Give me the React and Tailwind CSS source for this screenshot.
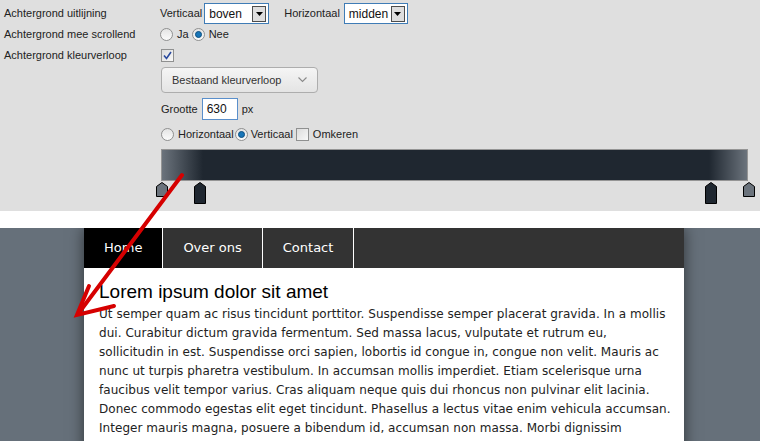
import React from 'react';

const Radio = ({ checked }) => (
  <span className="inline-flex items-center justify-center w-[13px] h-[13px] rounded-full border border-[#8f9090] bg-gradient-to-b from-[#e4e4e4] to-[#fbfbfb] shrink-0">
    {checked && <span className="w-[7px] h-[7px] rounded-full bg-[#1976b8] border border-[#0d4f80]"></span>}
  </span>
);

const Checkbox = ({ checked }) => (
  <span className="inline-flex items-center justify-center w-[13px] h-[13px] border border-[#8f9090] bg-gradient-to-br from-[#dcdcdc] to-[#f8f8f8] shrink-0">
    {checked && (
      <svg width="9" height="9" viewBox="0 0 9 9">
        <path d="M1 4.5 L3.5 7.5 L8 1" fill="none" stroke="#2a4a9e" strokeWidth="1.6" />
      </svg>
    )}
  </span>
);

const Select = ({ value, width }) => (
  <span className={`inline-flex items-center justify-between h-[21px] border border-[#3f7cb6] bg-white pl-[4px] pr-[2px] ${width}`}>
    <span className="text-[12px] text-[#111]">{value}</span>
    <span className="w-[14px] h-[16px] border border-[#4d4d4d] bg-[#dedede] flex items-center justify-center">
      <svg width="7" height="4" viewBox="0 0 7 4"><path d="M0 0 L7 0 L3.5 4 Z" fill="#000" /></svg>
    </span>
  </span>
);

const Marker = ({ left, dark }) => {
  const h = dark ? 21 : 14;
  return (
    <svg
      className="absolute top-[1px]"
      style={{ left: left }}
      width="12"
      height={h + 1}
      viewBox={`0 0 12 ${h + 1}`}
    >
      <path
        d={`M0.5 4.5 L6 0.5 L11.5 4.5 L11.5 ${h + 0.5} L0.5 ${h + 0.5} Z`}
        fill={dark ? '#1f2730' : '#6b737c'}
        stroke="#000"
        strokeWidth="1"
      />
    </svg>
  );
};

const lines = [
  'Ut semper quam ac risus tincidunt porttitor. Suspendisse semper placerat gravida. In a mollis',
  'dui. Curabitur dictum gravida fermentum. Sed massa lacus, vulputate et rutrum eu,',
  'sollicitudin in est. Suspendisse orci sapien, lobortis id congue in, congue non velit. Mauris ac',
  'nunc ut turpis pharetra vestibulum. In accumsan mollis imperdiet. Etiam scelerisque urna',
  'faucibus velit tempor varius. Cras aliquam neque quis dui rhoncus non pulvinar elit lacinia.',
  'Donec commodo egestas elit eget tincidunt. Phasellus a lectus vitae enim vehicula accumsan.',
  'Integer mauris magna, posuere a bibendum id, accumsan non massa. Morbi dignissim',
  'tristique urna ullamcorper molestie.'
];

export default function App() {
  return (
    <div className="relative w-[760px] h-[441px] overflow-hidden bg-white font-['DejaVu_Sans',sans-serif]">
      {/* Settings panel */}
      <div className="h-[211px] bg-[#dfdfdf] text-[11px] text-[#222] pl-[4px] pt-[3px] font-['Liberation_Sans',Arial,sans-serif]">
        <div className="grid grid-cols-[156px_1fr]">
          <div className="h-[21px] flex items-center">Achtergrond uitlijning</div>
          <div className="flex items-center h-[21px]">
            <span className="mr-[2px]">Verticaal</span>
            <Select value="boven" width="w-[65px]" />
            <span className="ml-[15px] mr-[4px]">Horizontaal</span>
            <Select value="midden" width="w-[64px]" />
          </div>

          <div className="h-[19px] flex items-center mt-[1px]">Achtergrond mee scrollend</div>
          <div className="h-[19px] flex items-center mt-[1px]">
            <Radio />
            <span className="ml-[4px] mr-[3px]">Ja</span>
            <Radio checked />
            <span className="ml-[4px]">Nee</span>
          </div>

          <div className="h-[22px] flex items-center">Achtergrond kleurverloop</div>
          <div className="h-[22px] flex items-center pl-[1px]">
            <Checkbox checked />
          </div>

          <div></div>
          <div className="pl-[1px] pt-[1px]">
            <div className="w-[157px] h-[26px] border border-[#adadad] rounded-[4px] bg-gradient-to-b from-[#f5f5f5] to-[#e4e4e4] flex items-center justify-between pl-[10px] pr-[10px] text-[11px] text-[#333]">
              <span>Bestaand kleurverloop</span>
              <svg width="9" height="6" viewBox="0 0 9 6"><path d="M0.5 0.5 L4.5 4.5 L8.5 0.5" fill="none" stroke="#8a8a8a" strokeWidth="1.1" /></svg>
            </div>

            <div className="flex items-center mt-[5px] h-[22px]">
              <span className="mr-[4px]">Grootte</span>
              <span className="w-[36px] h-[22px] border border-[#5a8fcb] bg-white flex items-center pl-[4px] text-[12px] text-[#111]">630</span>
              <span className="ml-[4px]">px</span>
            </div>

            <div className="flex items-center mt-[6px] h-[17px]">
              <Radio />
              <span className="ml-[4px] mr-[1px]">Horizontaal</span>
              <Radio checked />
              <span className="ml-[3px] mr-[3px]">Verticaal</span>
              <Checkbox />
              <span className="ml-[4px]">Omkeren</span>
            </div>
          </div>
        </div>

        {/* gradient editor */}
        <div className="relative ml-[157px] mt-[6px] w-[587px]">
          <div className="h-[32px] border border-[#959595] bg-[linear-gradient(to_right,#6b737c_0%,#1f2730_7%,#1f2730_93.5%,#6b737c_100%)]"></div>
          <div className="relative h-[24px]">
            <Marker left={-5} />
            <Marker left={33} dark />
            <Marker left={544} dark />
            <Marker left={582} />
          </div>
        </div>
      </div>

      <div className="h-[17px] bg-white"></div>

      {/* Preview */}
      <div className="h-[213px] bg-[#66707a] pl-[84px] overflow-hidden">
        <div className="w-[600px] h-[260px] bg-white shadow-[0_0_14px_rgba(0,0,0,0.55)]">
          <nav className="h-[40px] bg-[#333333] flex text-[13px] text-white">
            <span className="h-full flex items-center px-[20px] bg-black border-r border-white">Home</span>
            <span className="h-full flex items-center px-[20px] border-r border-white">Over ons</span>
            <span className="h-full flex items-center px-[20px] border-r border-white">Contact</span>
          </nav>
          <div className="px-[15px]">
            <h1 className="mt-[13px] text-[19px] leading-[22px] text-black font-['Liberation_Sans',Arial,sans-serif]">
              Lorem ipsum dolor sit amet
            </h1>
            <div className="mt-[2px] text-[12px] leading-[19px] text-[#222] tracking-[0.04px]">
              {lines.map((l, i) => (
                <div key={i} className="whitespace-nowrap">{l}</div>
              ))}
            </div>
          </div>
        </div>
      </div>

      {/* red annotation arrow */}
      <svg className="absolute inset-0 pointer-events-none" width="760" height="441" viewBox="0 0 760 441">
        <g stroke="#d60000" strokeWidth="4" strokeLinecap="round" fill="none">
          <path d="M182 175 L78 314" />
          <path d="M89 286 L77 315 L114 306" strokeLinejoin="miter" />
        </g>
      </svg>
    </div>
  );
}
